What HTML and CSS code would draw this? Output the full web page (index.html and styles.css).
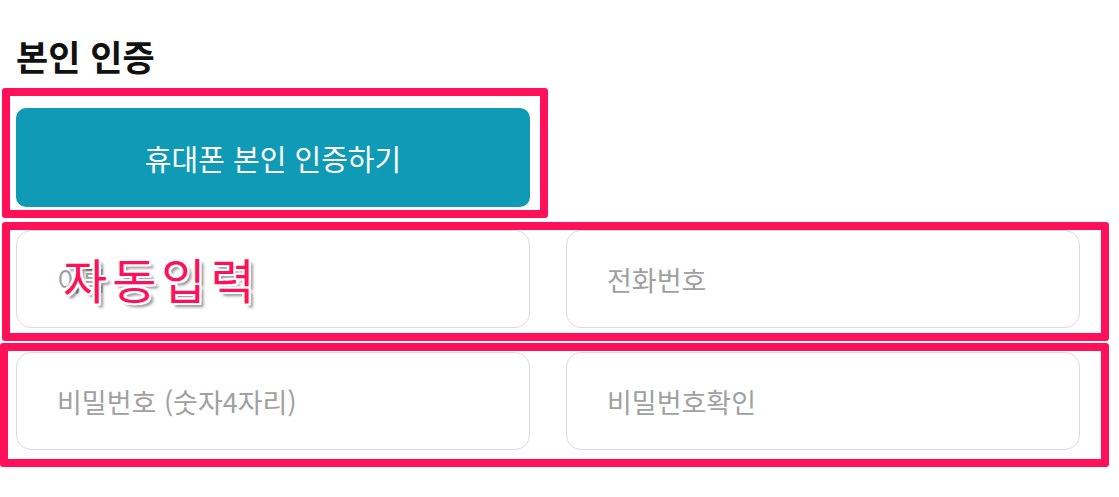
FILE: index.html
```html
<!DOCTYPE html>
<html lang="ko">
<head>
    <meta charset="UTF-8">
    <meta name="viewport" content="width=device-width, initial-scale=1.0">
    <title>본인 인증</title>
    <link rel="stylesheet" href="styles.css">
</head>
<body>
    <div class="container">
        <h2 class="section-title">본인 인증</h2>
        <div class="auth-row">
            <button class="auth-button" type="button">휴대폰 본인 인증하기</button>
        </div>
        <div class="field-grid">
            <input class="field" type="text" placeholder="이름">
            <input class="field" type="text" placeholder="전화번호">
            <input class="field" type="password" placeholder="비밀번호 (숫자4자리)">
            <input class="field" type="password" placeholder="비밀번호확인">
        </div>

        <!-- annotation marks over the screenshot -->
        <div class="mark mark-button"></div>
        <div class="mark mark-row1"></div>
        <div class="mark mark-row2"></div>
        <div class="mark-label">자동입력</div>
    </div>
</body>
</html>
```

FILE: styles.css
```css
body {
    margin: 0;
    font-family: "Noto Sans CJK KR", "Noto Sans", sans-serif;
    background-color: white;
}
.container {
    position: relative;
    width: 1064px;
    padding: 36px 16px 40px;
}
.section-title {
    margin: 0 0 32px 0;
    font-size: 35px;
    line-height: 40px;
    font-weight: bold;
    color: #111;
}
.auth-row {
    width: 514px;
}
.auth-button {
    display: block;
    width: 100%;
    height: 99px;
    border: none;
    border-radius: 10px;
    background-color: #0f9bb6;
    color: white;
    font-family: inherit;
    font-size: 29px;
}
.field-grid {
    display: grid;
    grid-template-columns: 514px 514px;
    column-gap: 36px;
    row-gap: 24px;
    margin-top: 23px;
}
.field {
    box-sizing: border-box;
    height: 98px;
    padding: 0 40px;
    border: 1px solid #dcdcdc;
    border-radius: 15px;
    font-family: inherit;
    font-size: 27px;
    color: #333;
    outline: none;
}
.field::placeholder {
    color: #a0a0a0;
}
.mark {
    position: absolute;
    box-sizing: border-box;
    border: 8px solid #ff1059;
    border-radius: 3px;
}
.mark-button {
    left: 2px;
    top: 88px;
    width: 546px;
    height: 130px;
}
.mark-row1 {
    left: 2px;
    top: 222px;
    width: 1107px;
    height: 119px;
}
.mark-row2 {
    left: 0;
    top: 343px;
    width: 1109px;
    height: 124px;
}
.mark-label {
    position: absolute;
    left: 63px;
    top: 249px;
    font-size: 48px;
    line-height: 58px;
    color: #ff1059;
    letter-spacing: 5px;
    text-shadow: -2px 0 white, 2px 0 white, 0 -2px white, 0 2px white,
        2px 2px white, -2px -2px white, 2px -2px white, -2px 2px white,
        4px 4px 3px rgba(0,0,0,0.45);
}
```
